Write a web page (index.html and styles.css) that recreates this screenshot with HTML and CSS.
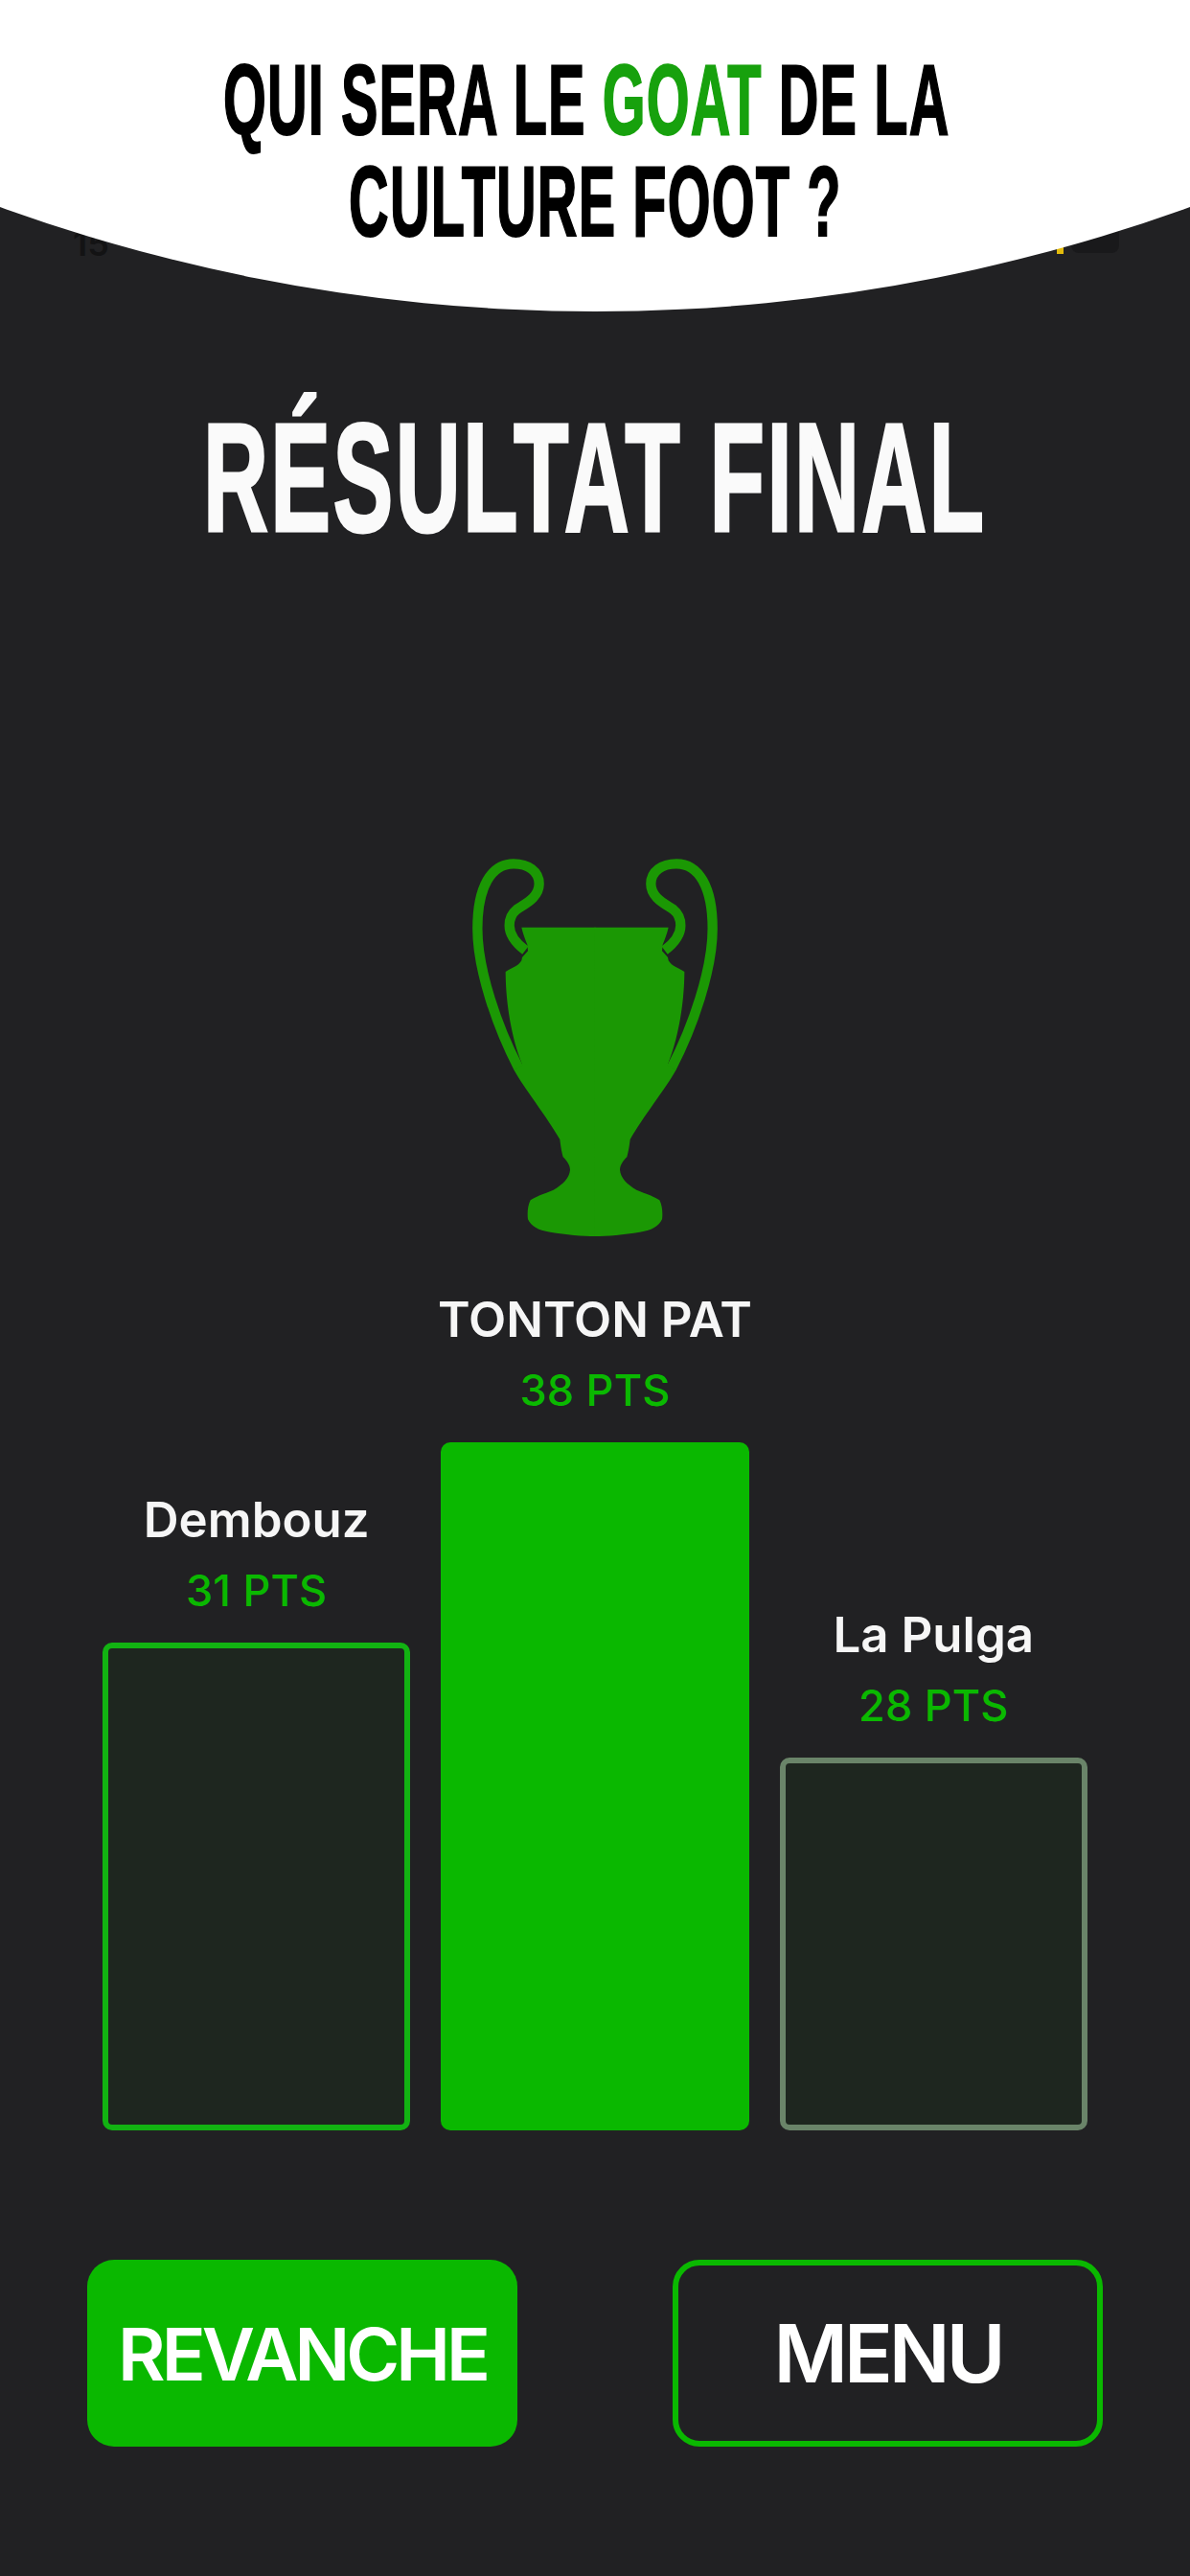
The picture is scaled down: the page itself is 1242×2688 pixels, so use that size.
FILE: index.html
```html
<!DOCTYPE html>
<html lang="fr">
<head>
<meta charset="utf-8">
<title>Résultat final</title>
<link rel="stylesheet" href="styles.css">
</head>
<body>
<div class="page">
  <div class="status">
    <span class="status-time">15</span>
    <span class="status-dot"></span>
    <span class="status-battery"></span>
  </div>
  <header class="cap">
    <h1 class="question">
      <span class="question-line question-line-first">QUI SERA LE <span class="goat">GOAT</span> DE LA</span>
      <span class="question-line">CULTURE FOOT ?</span>
    </h1>
  </header>
  <main class="content">
    <h2 class="final"><span class="final-text">RÉSULTAT FINAL</span></h2>
    <svg class="trophy" viewBox="0 0 1020 1320" aria-hidden="true">
      <defs>
        <g id="half">
          <path class="trophy-fill" d="M512 296 L280 296 C284 315 292 335 298 350 L300 370 L282 390 L280 400 C270 418 245 425 230 435 C230 500 240 620 282 725 L256 742 C288 800 360 890 400 960 C403 985 406 1000 410 1015 C420 1025 432 1040 432 1055 C430 1080 410 1100 380 1118 C350 1130 320 1140 308 1150 C298 1170 298 1195 300 1210 C310 1230 330 1245 370 1250 C420 1258 470 1263 512 1263 Z"/>
          <path class="trophy-handle" d="M270 735 C205 610 142 430 142 300 C142 170 185 97 255 97 C300 97 335 120 335 160 C335 205 285 225 265 240 C250 252 242 268 242 290 C242 320 262 345 292 368"/>
        </g>
      </defs>
      <use href="#half"/>
      <use href="#half" transform="matrix(-1 0 0 1 1020 0)"/>
    </svg>
    <section class="podium">
      <div class="player">
        <div class="player-name">Dembouz</div>
        <div class="player-points">31 PTS</div>
        <div class="bar bar-second"></div>
      </div>
      <div class="player">
        <div class="player-name">TONTON PAT</div>
        <div class="player-points">38 PTS</div>
        <div class="bar bar-first"></div>
      </div>
      <div class="player">
        <div class="player-name">La Pulga</div>
        <div class="player-points">28 PTS</div>
        <div class="bar bar-third"></div>
      </div>
    </section>
    <div class="actions">
      <button class="btn btn-primary" type="button">REVANCHE</button>
      <button class="btn btn-outline" type="button">MENU</button>
    </div>
  </main>
</div>
</body>
</html>
```
FILE: styles.css
```css
* { box-sizing: border-box; }
html, body { margin: 0; padding: 0; }
body { background: #212123; font-family: "Inter", "Liberation Sans", sans-serif; }
.page {
  position: relative;
  width: 1242px;
  height: 2688px;
  overflow: hidden;
  background: #212123;
  display: flex;
  flex-direction: column;
}
.status { position: absolute; inset: 0 0 auto 0; height: 280px; }
.status-time {
  position: absolute; left: 76px; top: 234px;
  font: 600 36px/40px "Inter", sans-serif; color: #131314;
}
.status-dot {
  position: absolute; left: 1103px; top: 256px; width: 7px; height: 9px;
  background: #e3bb0c;
}
.status-battery {
  position: absolute; left: 1118px; top: 230px; width: 50px; height: 34px;
  background: #19191b; border-radius: 8px;
}
.cap {
  position: relative;
  height: 325px;
  flex: none;
  background: #fff;
  clip-path: circle(1823.5px at 50% -1498.5px);
  padding-top: 52px;
}
.question {
  margin: 0;
  display: flex;
  flex-direction: column;
  align-items: center;
  font: 700 103px/106px "Liberation Sans", Arial, sans-serif;
  letter-spacing: 2px;
  color: #000;
}
.question-line {
  display: block;
  white-space: nowrap;
  transform: scaleX(0.56);
  -webkit-text-stroke: 2px currentColor;
}
.question-line-first { margin-right: 18px; }
.goat { color: #17a10d; }
.content {
  flex: 1;
  display: flex;
  flex-direction: column;
}
.final {
  margin: 88px 0 0;
  display: flex;
  justify-content: center;
  font: 700 161px/170px "Liberation Sans", Arial, sans-serif;
  letter-spacing: 4px;
  color: #fafafa;
}
.final-text {
  display: block;
  white-space: nowrap;
  transform: scaleX(0.585);
  -webkit-text-stroke: 3px currentColor;
}
.trophy {
  display: block;
  width: 340px;
  height: 440px;
  margin: 286px auto 0;
  flex: none;
}
.trophy-fill { fill: #1b9804; }
.trophy-handle { fill: none; stroke: #1b9804; stroke-width: 31; }
.podium {
  display: grid;
  grid-template-columns: repeat(3, minmax(0, 1fr));
  column-gap: 32px;
  align-items: end;
  padding: 0 107px;
  margin-top: 38px;
}
.player {
  display: flex;
  flex-direction: column;
  align-items: center;
}
.player-name {
  font-size: 51px;
  line-height: 60px;
  font-weight: 600;
  color: #f6f6f6;
  white-space: nowrap;
}
.player-points {
  font-size: 45px;
  line-height: 54px;
  font-weight: 500;
  letter-spacing: 0.2px;
  color: #0ab800;
  margin-top: 17px;
  white-space: nowrap;
}
.bar {
  width: 100%;
  margin-top: 27px;
  border-radius: 10px;
  background: #1e261f;
  border: 6px solid #12b312;
}
.bar-first { height: 718px; background: #0ab800; border: 0; }
.bar-second { height: 509px; }
.bar-third { height: 389px; border-color: #6a8469; }
.actions {
  display: flex;
  justify-content: space-between;
  padding: 0 91px;
  margin-top: 135px;
}
.btn {
  width: 449px;
  height: 195px;
  border-radius: 28px;
  font-family: "Inter", sans-serif;
  font-weight: 600;
  color: #fff;
  padding: 0;
  white-space: nowrap;
  cursor: pointer;
}
.btn-primary { background: #0ab800; border: 0; font-size: 76px; letter-spacing: -4px; }
.btn-outline { background: transparent; border: 6px solid #0ab800; font-size: 84px; letter-spacing: -4px; }
```
